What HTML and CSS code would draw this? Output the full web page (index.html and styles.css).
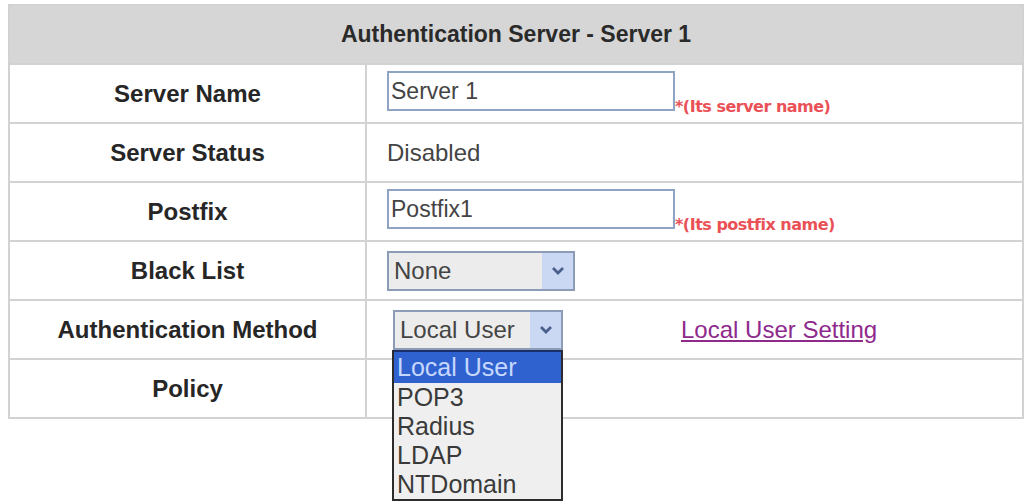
FILE: index.html
```html
<!DOCTYPE html>
<html lang="en">
<head>
    <meta charset="UTF-8">
    <title>Authentication Server - Server 1</title>
    <link rel="stylesheet" href="styles.css">
</head>
<body>
    <table class="auth-table">
        <colgroup>
            <col class="label-col">
            <col>
        </colgroup>
        <tr>
            <th colspan="2" class="table-title">Authentication Server - Server 1</th>
        </tr>
        <tr>
            <td class="field-label">Server Name</td>
            <td class="field-value">
                <input type="text" class="text-box" value="Server 1"><span class="hint">*(Its server name)</span>
            </td>
        </tr>
        <tr>
            <td class="field-label">Server Status</td>
            <td class="field-value plain">Disabled</td>
        </tr>
        <tr>
            <td class="field-label">Postfix</td>
            <td class="field-value">
                <input type="text" class="text-box" value="Postfix1"><span class="hint">*(Its postfix name)</span>
            </td>
        </tr>
        <tr>
            <td class="field-label">Black List</td>
            <td class="field-value">
                <div class="combo combo-wide">
                    <span class="combo-text">None</span>
                    <span class="combo-arrow">
                        <svg width="14" height="10" viewBox="0 0 14 10"><path d="M2 2 L7 7 L12 2" fill="none" stroke="#4b5f8c" stroke-width="2.8"/></svg>
                    </span>
                </div>
            </td>
        </tr>
        <tr>
            <td class="field-label">Authentication Method</td>
            <td class="field-value">
                <div class="method-row">
                    <div class="combo-wrap">
                        <div class="combo combo-method">
                            <span class="combo-text">Local User</span>
                            <span class="combo-arrow">
                                <svg width="14" height="10" viewBox="0 0 14 10"><path d="M2 2 L7 7 L12 2" fill="none" stroke="#4b5f8c" stroke-width="2.8"/></svg>
                            </span>
                        </div>
                        <!-- open option list of the method select -->
                        <ul class="combo-list">
                            <li class="selected">Local User</li>
                            <li>POP3</li>
                            <li>Radius</li>
                            <li>LDAP</li>
                            <li>NTDomain</li>
                        </ul>
                    </div>
                    <a href="#" class="setting-link">Local User Setting</a>
                </div>
            </td>
        </tr>
        <tr>
            <td class="field-label">Policy</td>
            <td class="field-value"></td>
        </tr>
    </table>
</body>
</html>
```

FILE: styles.css
```css
html, body {
    min-height: 100vh;
}

body {
    margin: 0;
    padding: 0;
    background-color: #ffffff;
    font-family: "Liberation Sans", Arial, sans-serif;
    color: #333;
}

.auth-table {
    margin: 4px 0 0 8px;
    width: 1016px;
    border-collapse: collapse;
    border: 2px solid #cdcdcd;
}

.label-col {
    width: 357px;
}

.auth-table th,
.auth-table td {
    border: 2px solid #d2d2d2;
    padding: 0;
    height: 57px;
}

.table-title {
    height: 56px;
    background-color: #d6d6d6;
    font-size: 23px;
    font-weight: bold;
    color: #2a2a2a;
    text-align: center;
}

.field-label {
    text-align: center;
    font-size: 24px;
    font-weight: bold;
    color: #262626;
}

.field-value {
    padding-left: 20px !important;
    font-size: 24px;
    color: #444;
}

.text-box {
    box-sizing: border-box;
    width: 288px;
    height: 40px;
    margin: 0;
    padding: 0 2px;
    border: 2px solid #8fa4c4;
    font-family: "Liberation Sans", Arial, sans-serif;
    font-size: 23px;
    color: #444;
    vertical-align: middle;
    outline: none;
}

.hint {
    display: inline-block;
    vertical-align: -14px;
    font-family: "DejaVu Sans", Verdana, sans-serif;
    font-size: 16px;
    font-weight: bold;
    letter-spacing: -0.5px;
    color: #ea5157;
}

.combo {
    box-sizing: border-box;
    display: flex;
    align-items: stretch;
    height: 40px;
    border: 2px solid #8c9bb6;
    background-color: #ececec;
}

.combo-wide {
    width: 188px;
}

.combo-method {
    width: 170px;
}

.combo-text {
    flex: 1;
    display: flex;
    align-items: center;
    padding-left: 5px;
    font-size: 24px;
    color: #444;
}

.combo-arrow {
    width: 31px;
    display: flex;
    align-items: center;
    justify-content: center;
    background-color: #cbd8f3;
}

.method-row {
    display: flex;
    align-items: center;
    gap: 118px;
    padding-left: 6px;
}

.combo-wrap {
    position: relative;
}

.combo-list {
    position: absolute;
    top: 100%;
    left: -1px;
    box-sizing: border-box;
    width: 171px;
    margin: 0;
    padding: 0;
    list-style: none;
    background-color: #efefef;
    border: 2px solid #2c2c2c;
    border-top: none;
    z-index: 2;
}

.combo-list li {
    height: 29px;
    line-height: 29px;
    padding-left: 3px;
    font-size: 25px;
    color: #3a3a3a;
}

.combo-list .selected {
    height: 31px;
    line-height: 31px;
    background-color: #2f62cf;
    color: #c6d8ff;
    border-top: 2px solid #1b2f6a;
}

.setting-link {
    font-size: 24px;
    color: #8e2a8c;
    text-decoration: underline;
}
```
